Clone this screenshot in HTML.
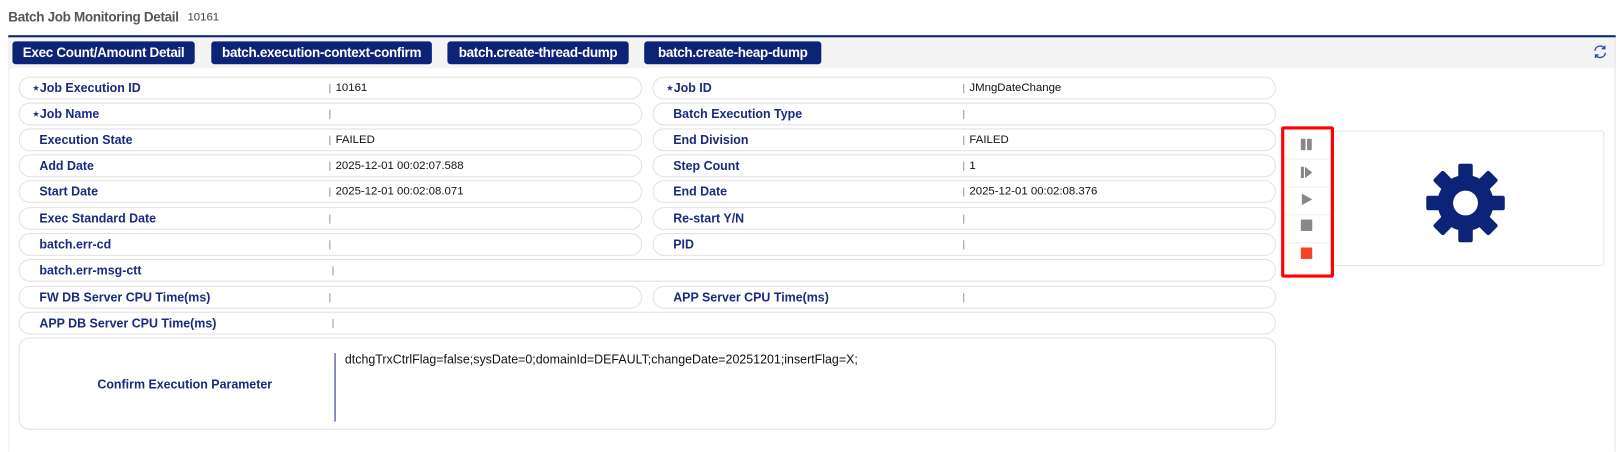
<!DOCTYPE html>
<html><head><style>
*{box-sizing:border-box;margin:0;padding:0}
body{width:1624px;height:443px;background:#fff;font-family:"Liberation Sans",sans-serif;position:relative;overflow:hidden}
#w{position:absolute;left:0;top:0;width:1568px;height:428px;transform:scale(1.0357);transform-origin:0 0}
.a{position:absolute}
.title{left:8px;top:9px;font-size:13px;color:#555;font-weight:bold;letter-spacing:-0.3px}
.num{left:181px;top:11px;font-size:11px;color:#444}
.bar{left:8px;top:34px;width:1552px;height:2px;background:#0d2378}
.tool{left:8px;top:36px;width:1552px;height:30px;background:#f4f4f4}
.frame{left:8px;top:36px;width:1552px;height:400px;border-right:1px solid #e6e6e6;border-left:1px solid #eee}
.btn{top:40px;height:22px;background:#0d2378;color:#fff;font-size:13px;font-weight:bold;text-align:center;line-height:22px;border-radius:3px;letter-spacing:-0.3px}
.row{height:22px;border:1px solid #e2e2e2;border-radius:11px;font-size:12px;font-weight:bold;color:#1a2a80;line-height:20px}
.lab{position:absolute;left:12px;top:0}
.sep{position:absolute;top:6px;width:1px;height:9px;background:#999}
.val{position:absolute;top:0;font-weight:normal;color:#111;font-size:11px}
</style></head><body><div id="w">
<div class="a title">Batch Job Monitoring Detail</div>
<div class="a num">10161</div>
<div class="a tool"></div>
<div class="a frame"></div>
<div class="a bar"></div>
<div class="a btn" style="left:12px;width:176px">Exec Count/Amount Detail</div>
<div class="a btn" style="left:204px;width:213px">batch.execution-context-confirm</div>
<div class="a btn" style="left:432px;width:175px">batch.create-thread-dump</div>
<div class="a btn" style="left:622px;width:171px">batch.create-heap-dump</div>
<svg class="a" style="left:1537px;top:42px" width="16" height="16" viewBox="0 0 16 16" fill="none" stroke="#2a4bb0" stroke-width="1.3"><path d="M3 7a5 5 0 0 1 9-2.5M13 9a5 5 0 0 1-9 2.5"/><path d="M12.5 2v3h-3M3.5 14v-3h3"/></svg>

<div class="a row" style="left:18px;top:74px;width:602px"><span class="lab">⋆Job Execution ID</span><span class="sep" style="left:299px"></span><span class="val" style="left:305px">10161</span></div>
<div class="a row" style="left:630px;top:74px;width:602px"><span class="lab">⋆Job ID</span><span class="sep" style="left:299px"></span><span class="val" style="left:305px">JMngDateChange</span></div>
<div class="a row" style="left:18px;top:99px;width:602px"><span class="lab">⋆Job Name</span><span class="sep" style="left:299px"></span></div>
<div class="a row" style="left:630px;top:99px;width:602px"><span class="lab" style="left:19px">Batch Execution Type</span><span class="sep" style="left:299px"></span></div>
<div class="a row" style="left:18px;top:124px;width:602px"><span class="lab" style="left:19px">Execution State</span><span class="sep" style="left:299px"></span><span class="val" style="left:305px">FAILED</span></div>
<div class="a row" style="left:630px;top:124px;width:602px"><span class="lab" style="left:19px">End Division</span><span class="sep" style="left:299px"></span><span class="val" style="left:305px">FAILED</span></div>
<div class="a row" style="left:18px;top:149px;width:602px"><span class="lab" style="left:19px">Add Date</span><span class="sep" style="left:299px"></span><span class="val" style="left:305px">2025-12-01 00:02:07.588</span></div>
<div class="a row" style="left:630px;top:149px;width:602px"><span class="lab" style="left:19px">Step Count</span><span class="sep" style="left:299px"></span><span class="val" style="left:305px">1</span></div>
<div class="a row" style="left:18px;top:174px;width:602px"><span class="lab" style="left:19px">Start Date</span><span class="sep" style="left:299px"></span><span class="val" style="left:305px">2025-12-01 00:02:08.071</span></div>
<div class="a row" style="left:630px;top:174px;width:602px"><span class="lab" style="left:19px">End Date</span><span class="sep" style="left:299px"></span><span class="val" style="left:305px">2025-12-01 00:02:08.376</span></div>
<div class="a row" style="left:18px;top:200px;width:602px"><span class="lab" style="left:19px">Exec Standard Date</span><span class="sep" style="left:299px"></span></div>
<div class="a row" style="left:630px;top:200px;width:602px"><span class="lab" style="left:19px">Re-start Y/N</span><span class="sep" style="left:299px"></span></div>
<div class="a row" style="left:18px;top:225px;width:602px"><span class="lab" style="left:19px">batch.err-cd</span><span class="sep" style="left:299px"></span></div>
<div class="a row" style="left:630px;top:225px;width:602px"><span class="lab" style="left:19px">PID</span><span class="sep" style="left:299px"></span></div>
<div class="a row" style="left:18px;top:250px;width:1214px"><span class="lab" style="left:19px">batch.err-msg-ctt</span><span class="sep" style="left:302px"></span></div>
<div class="a row" style="left:18px;top:276px;width:602px"><span class="lab" style="left:19px">FW DB Server CPU Time(ms)</span><span class="sep" style="left:299px"></span></div>
<div class="a row" style="left:630px;top:276px;width:602px"><span class="lab" style="left:19px">APP Server CPU Time(ms)</span><span class="sep" style="left:299px"></span></div>
<div class="a row" style="left:18px;top:301px;width:1214px"><span class="lab" style="left:19px">APP DB Server CPU Time(ms)</span><span class="sep" style="left:302px"></span></div>
<div class="a row" style="left:18px;top:326px;width:1214px;height:89px;border-radius:10px">
 <span class="lab" style="left:75px;top:34px">Confirm Execution Parameter</span>
 <span class="a" style="left:304px;top:14px;width:1px;height:66px;background:#1a2a80"></span>
 <span class="val" style="left:314px;top:10px;font-size:12px">dtchgTrxCtrlFlag=false;sysDate=0;domainId=DEFAULT;changeDate=20251201;insertFlag=X;</span>
</div>

<div class="a" style="left:1287px;top:126px;width:262px;height:131px;border:1px solid #e6e6e6;border-radius:3px"></div>
<div class="a" style="left:1241px;top:126px;width:44px;height:131px;border-right:1px solid #e6e6e6;border-left:1px solid #eee"></div>
<div class="a" style="left:1241px;top:153px;width:44px;height:1px;background:#eee"></div>
<div class="a" style="left:1241px;top:180px;width:44px;height:1px;background:#eee"></div>
<div class="a" style="left:1241px;top:207px;width:44px;height:1px;background:#eee"></div>
<div class="a" style="left:1241px;top:234px;width:44px;height:1px;background:#eee"></div>
<div class="a" style="left:1237px;top:122px;width:51px;height:146px;border:3px solid #ff0000;border-radius:2px"></div>
<svg class="a" style="left:1255px;top:133px" width="14" height="120" viewBox="0 0 14 120">
<rect x="1" y="1" width="4.5" height="11" fill="#888"/><rect x="7" y="1" width="4.5" height="11" fill="#888"/>
<rect x="1" y="28" width="3" height="11" fill="#888"/><path d="M5 28l7 5.5-7 5.5z" fill="#888"/>
<path d="M2 54l10 5.5-10 5.5z" fill="#888"/>
<rect x="1" y="79" width="11" height="11" fill="#888"/>
<rect x="1" y="106" width="11" height="11" fill="#f44325"/>
</svg>
<svg class="a" style="left:1377px;top:158px" width="76" height="76" viewBox="0 0 76 76">
<g fill="#0d2378" transform="translate(38 38)">
<circle r="27"/>
<g id="t"><rect x="-7" y="-38" width="14" height="14" rx="2"/></g>
<use href="#t" transform="rotate(45)"/><use href="#t" transform="rotate(90)"/><use href="#t" transform="rotate(135)"/><use href="#t" transform="rotate(180)"/><use href="#t" transform="rotate(225)"/><use href="#t" transform="rotate(270)"/><use href="#t" transform="rotate(315)"/>
<circle r="12" fill="#fff"/>
</g></svg>
</div></body></html>
